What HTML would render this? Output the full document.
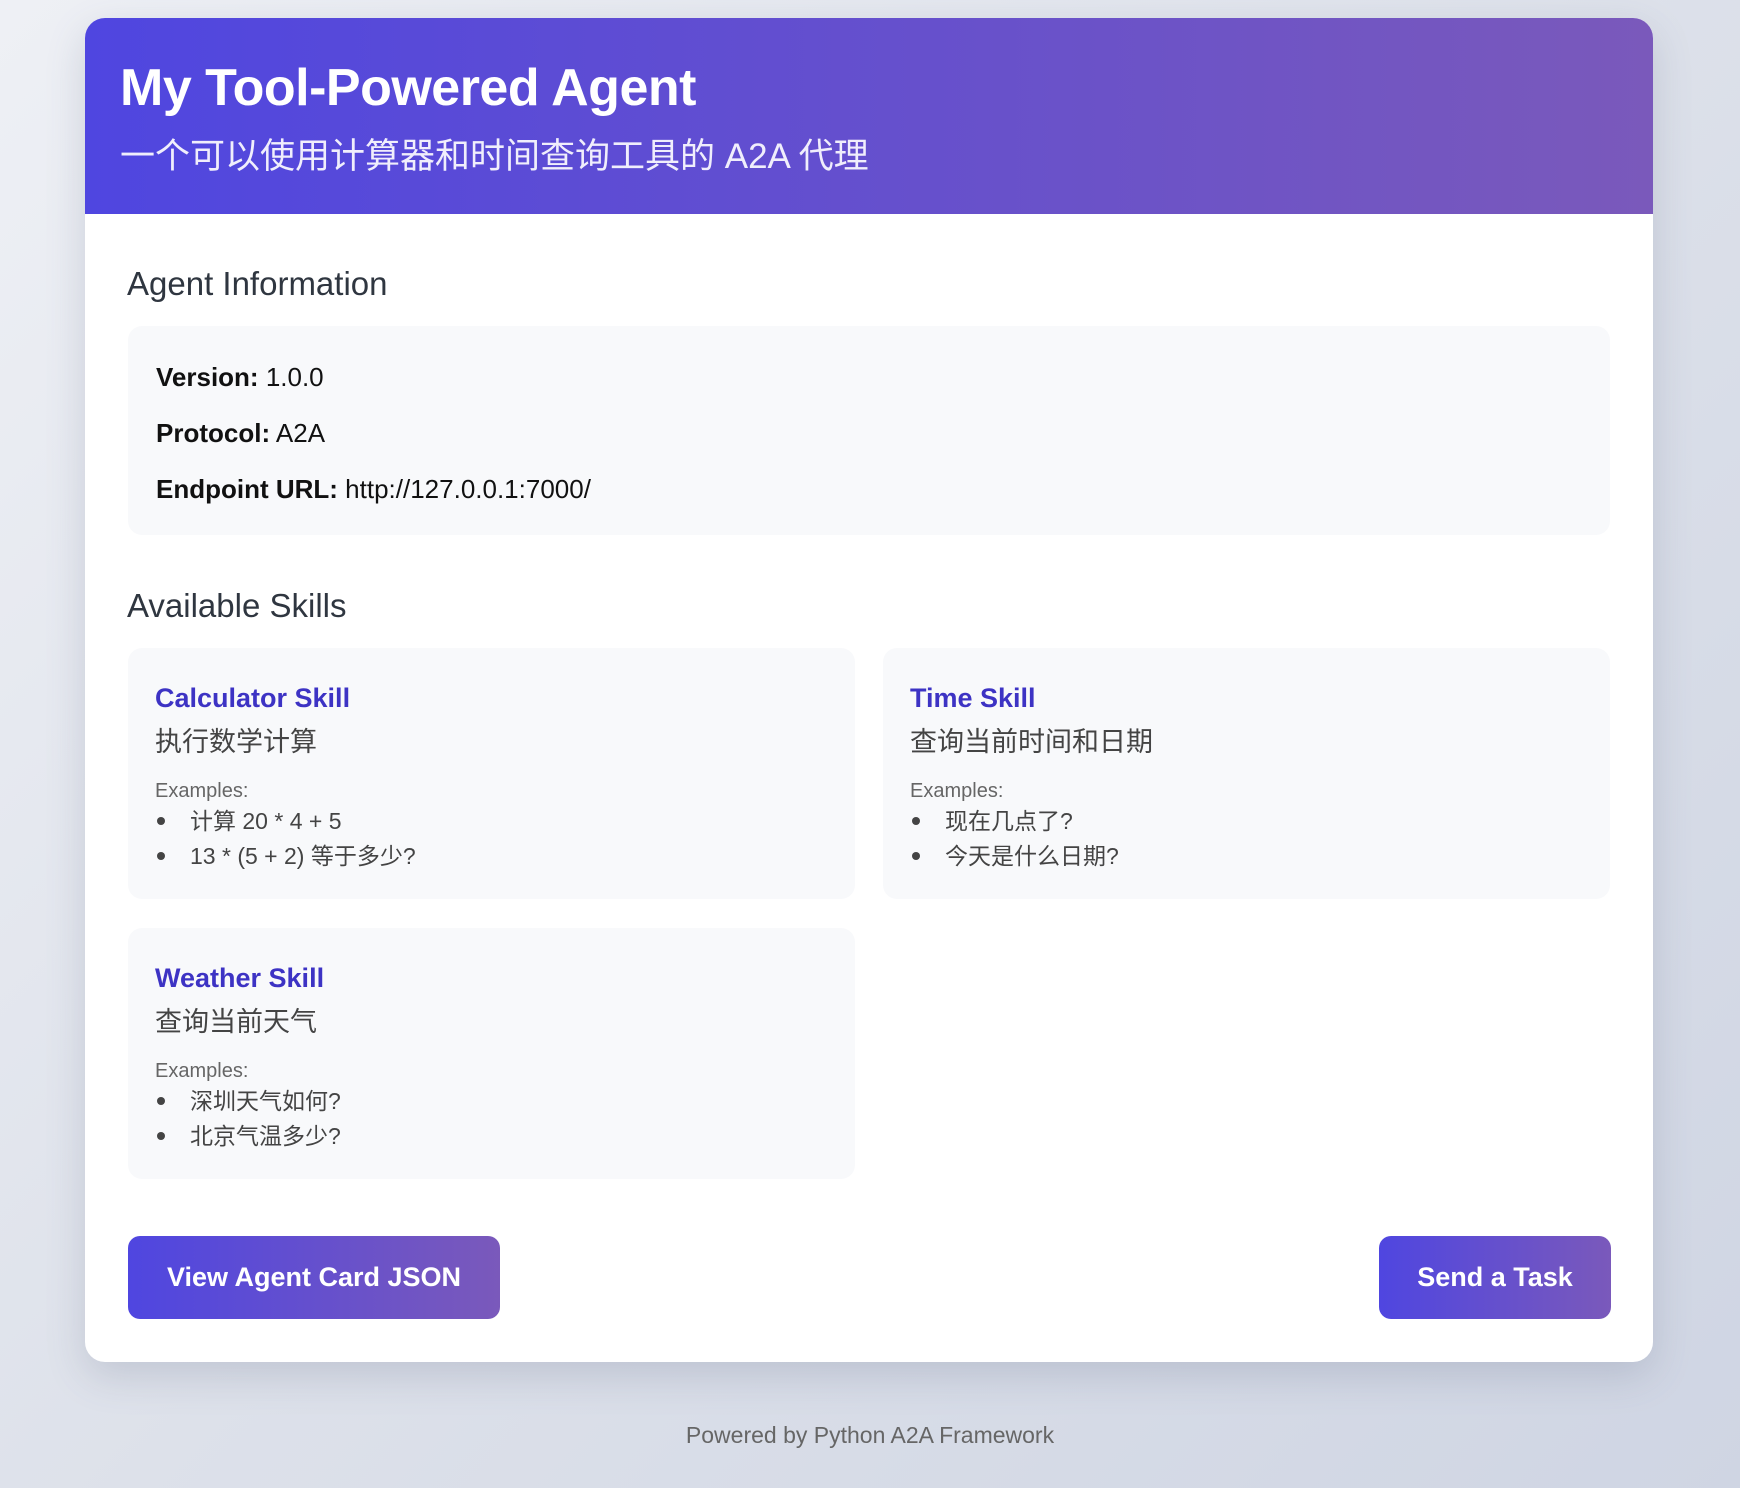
<!DOCTYPE html>
<html><head><meta charset="utf-8"><style>
*{margin:0;padding:0;box-sizing:border-box}
body{width:1740px;height:1488px;overflow:hidden;background:linear-gradient(135deg,#eef0f5 0%,#dde1ea 50%,#cfd5e3 100%);font-family:"Liberation Sans","Noto Sans CJK SC",sans-serif;position:relative}
.c{position:absolute;left:85px;top:18px;width:1568px;height:1344px;background:#fff;border-radius:20px;overflow:hidden;box-shadow:0 14px 40px rgba(80,90,120,.2)}
.hd{position:absolute;left:0;top:0;width:100%;height:196px;background:linear-gradient(90deg,#4f46e0,#7a59bb)}
.t{position:absolute;left:35px;top:40px;color:#fff;font-size:52px;font-weight:bold;white-space:nowrap;letter-spacing:-0.5px}
.st{position:absolute;left:35px;top:110px;color:#f0eefc;font-size:35px;white-space:nowrap}
.h2{position:absolute;left:42px;font-size:33px;color:#2f3640;white-space:nowrap}
.box{position:absolute;background:#f8f9fb;border-radius:14px}
.ln{position:absolute;left:28px;font-size:26px;color:#111;white-space:nowrap}
.ln b{font-weight:bold}
.card{position:absolute;width:727px;height:251px;background:#f8f9fb;border-radius:14px}
.ct{position:absolute;left:27px;top:35px;font-size:27px;font-weight:bold;color:#3d33c4;white-space:nowrap}
.cd{position:absolute;left:27px;top:72px;font-size:27px;color:#444;white-space:nowrap}
.ex{position:absolute;left:27px;top:132px;font-size:20px;color:#666}
.li{position:absolute;left:27px;font-size:23px;color:#444;white-space:nowrap}
.li:before{content:"";display:inline-block;width:8px;height:8px;border-radius:50%;background:#444;margin:0 25px 4px 2px;vertical-align:middle}
.btn{position:absolute;top:1218px;height:83px;border-radius:12px;background:linear-gradient(90deg,#4f46e0,#7a59bb);color:#fff;font-size:27px;font-weight:bold;display:flex;align-items:center;justify-content:center;white-space:nowrap}
.ft{position:absolute;top:1422px;left:0;width:1740px;text-align:center;font-size:23px;color:#666}
</style></head><body>
<div class="c">
<div class="hd"><div class="t">My Tool-Powered Agent</div><div class="st">一个可以使用计算器和时间查询工具的 A2A 代理</div></div>
<div class="h2" style="top:247px">Agent Information</div>
<div class="box" style="left:43px;top:308px;width:1482px;height:209px">
<div class="ln" style="top:36px"><b>Version:</b> 1.0.0</div>
<div class="ln" style="top:92px"><b>Protocol:</b> A2A</div>
<div class="ln" style="top:148px"><b>Endpoint URL:</b> http://127.0.0.1:7000/</div>
</div>
<div class="h2" style="top:569px">Available Skills</div>
<div class="card" style="left:43px;top:630px"><div class="ct">Calculator Skill</div><div class="cd">执行数学计算</div><div class="ex">Examples:</div><div class="li" style="top:154px">计算 20 * 4 + 5</div><div class="li" style="top:189px">13 * (5 + 2) 等于多少?</div></div>
<div class="card" style="left:798px;top:630px"><div class="ct">Time Skill</div><div class="cd">查询当前时间和日期</div><div class="ex">Examples:</div><div class="li" style="top:154px">现在几点了?</div><div class="li" style="top:189px">今天是什么日期?</div></div>
<div class="card" style="left:43px;top:910px"><div class="ct">Weather Skill</div><div class="cd">查询当前天气</div><div class="ex">Examples:</div><div class="li" style="top:154px">深圳天气如何?</div><div class="li" style="top:189px">北京气温多少?</div></div>
<div class="btn" style="left:43px;width:372px">View Agent Card JSON</div>
<div class="btn" style="left:1294px;width:232px">Send a Task</div>
</div>
<div class="ft">Powered by Python A2A Framework</div>
</body></html>
